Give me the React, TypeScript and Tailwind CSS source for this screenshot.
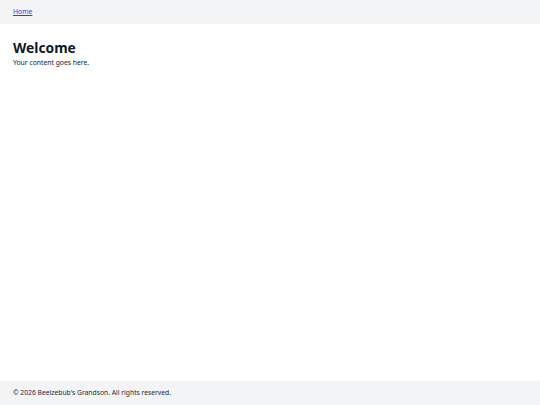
export default function App() {
  return (
    <div className="flex min-h-[405px] flex-col bg-white text-gray-900" style={{ fontFamily: '"Noto Sans", sans-serif' }}>
      <header className="flex h-[24px] items-center bg-gray-100 px-[13px] pt-[1px]">
        <a href="#" className="text-[6.8px] text-blue-700 underline">Home</a>
      </header>
      <main className="flex-1 px-[13px] pt-[15px]">
        <h1 className="text-[13.8px] font-bold leading-[18px]">Welcome</h1>
        <p className="text-[6.8px] leading-[11px]">Your content goes here.</p>
      </main>
      <footer className="flex h-[24px] items-center bg-gray-100 px-[13px] pt-[1px]">
        <p className="text-[6.75px] text-gray-800">© 2026 Beelzebub's Grandson. All rights reserved.</p>
      </footer>
    </div>
  );
}
